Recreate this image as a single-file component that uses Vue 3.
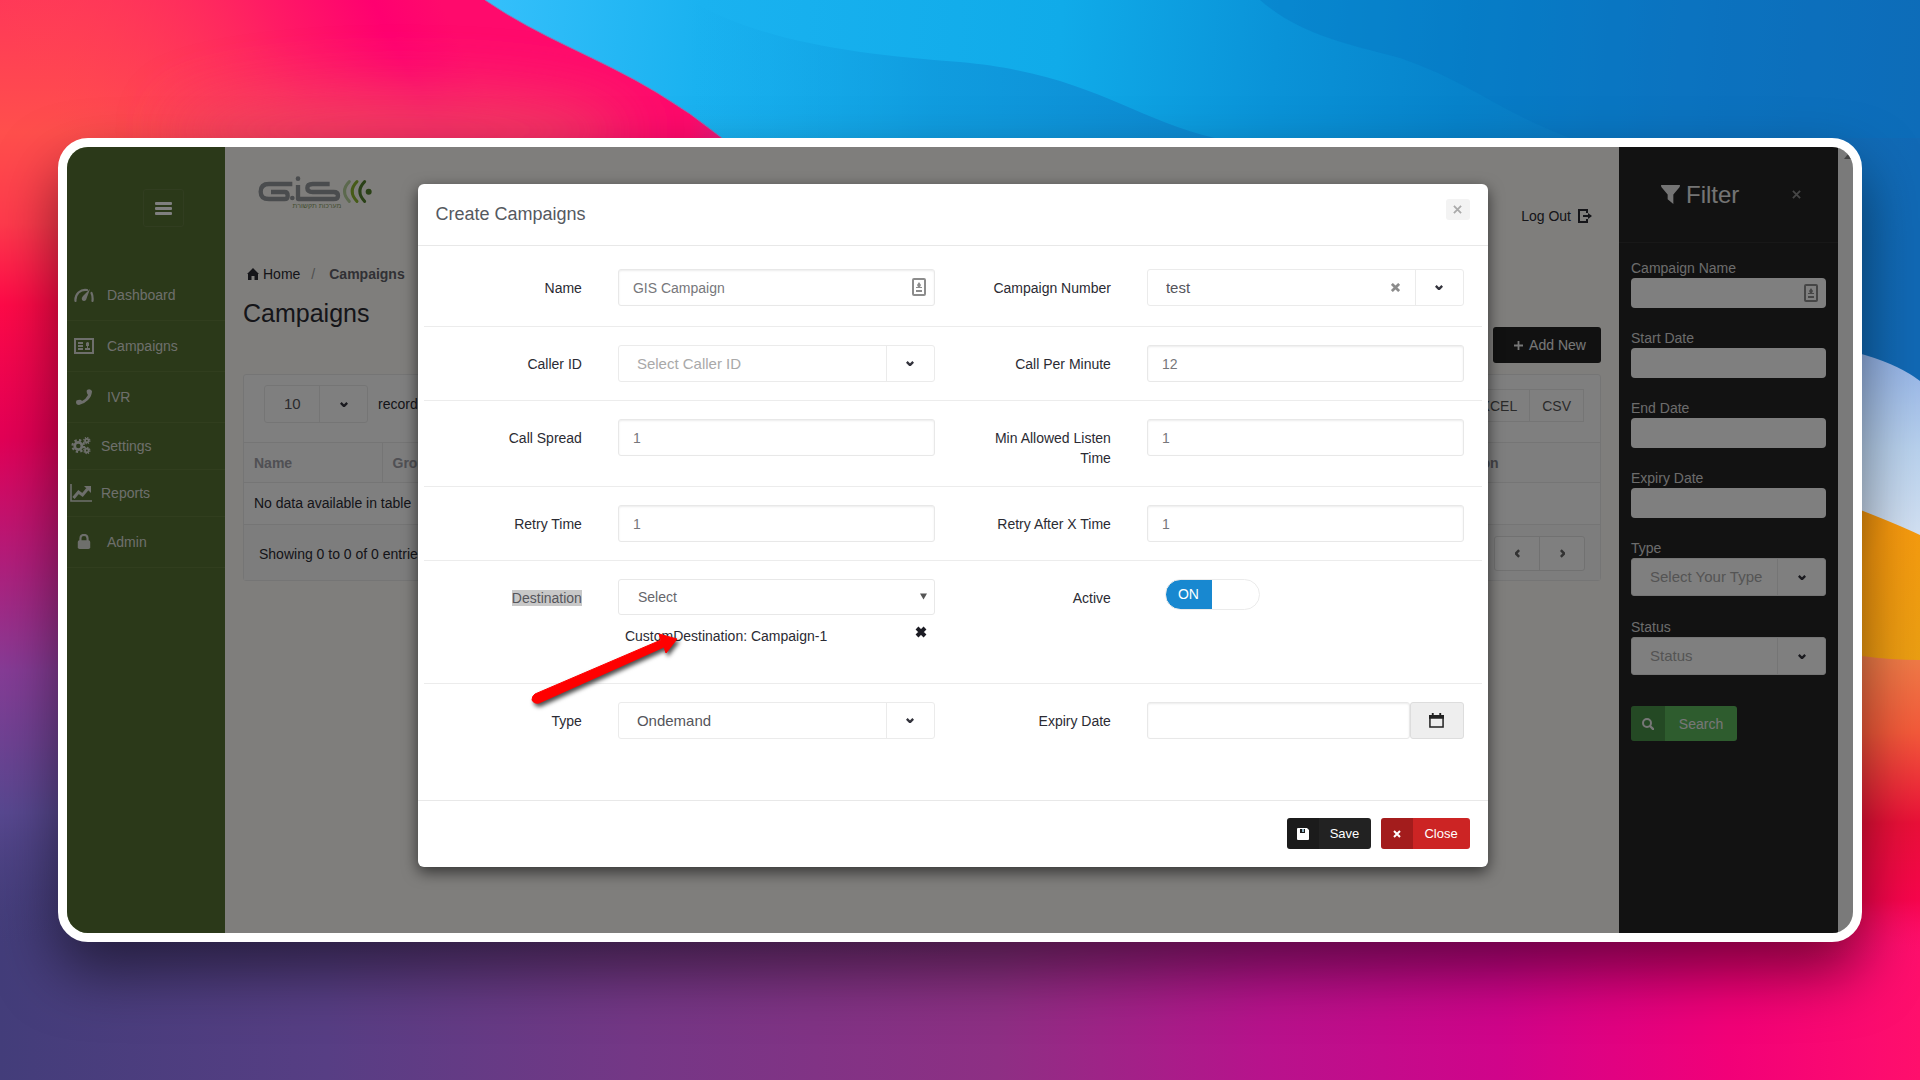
<script setup>
import { ref } from 'vue'

const navItems = [
  { label: 'Dashboard', icon: 'gauge' },
  { label: 'Campaigns', icon: 'card' },
  { label: 'IVR', icon: 'phone' },
  { label: 'Settings', icon: 'cogs', group: true },
  { label: 'Reports', icon: 'chart', group: true },
  { label: 'Admin', icon: 'lock' },
]

const filterDates = [
  { id: 'f-start', label: 'Start Date' },
  { id: 'f-end', label: 'End Date' },
  { id: 'f-expiry', label: 'Expiry Date' },
]

const filterSelects = [
  { id: 'f-type', label: 'Type', text: 'Select Your Type' },
  { id: 'f-status', label: 'Status', text: 'Status' },
]

const rows = [
  [
    { id: 'name', label: 'Name', kind: 'contact', value: 'GIS Campaign' },
    { id: 'number', label: 'Campaign Number', kind: 'select', value: 'test', clear: true },
  ],
  [
    { id: 'caller', label: 'Caller ID', kind: 'select', value: 'Select Caller ID', empty: true },
    { id: 'cpm', label: 'Call Per Minute', kind: 'text', value: '12' },
  ],
  [
    { id: 'spread', label: 'Call Spread', kind: 'text', value: '1' },
    { id: 'listen', label: 'Min Allowed Listen Time', kind: 'text', value: '1' },
  ],
  [
    { id: 'retry', label: 'Retry Time', kind: 'text', value: '1' },
    { id: 'retryx', label: 'Retry After X Time', kind: 'text', value: '1' },
  ],
  [
    { id: 'dest', label: 'Destination', kind: 'destination', value: 'Select' },
    { id: 'active', label: 'Active', kind: 'toggle' },
  ],
  [
    { id: 'type', label: 'Type', kind: 'select', value: 'Ondemand' },
    { id: 'expiry', label: 'Expiry Date', kind: 'date' },
  ],
]

const active = ref(true)
</script>

<template>
  <div class="stage">
    <svg class="wallpaper" viewBox="0 0 1920 1080" preserveAspectRatio="none" aria-hidden="true">
      <defs>
        <linearGradient id="wBottom" x1="0" x2="1" y1="0" y2="0">
          <stop offset="0" stop-color="#433d7a" />
          <stop offset=".17" stop-color="#573e84" />
          <stop offset=".33" stop-color="#743786" />
          <stop offset=".52" stop-color="#8e2f84" />
          <stop offset=".66" stop-color="#b8128c" />
          <stop offset=".78" stop-color="#d0048a" />
          <stop offset=".9" stop-color="#f20078" />
          <stop offset="1" stop-color="#ff0f6c" />
        </linearGradient>
        <linearGradient id="wLeft" x1="0" x2="0" y1="0" y2="1">
          <stop offset="0" stop-color="#ff3858" />
          <stop offset=".13" stop-color="#ff4f4c" />
          <stop offset=".22" stop-color="#ff3a4c" />
          <stop offset=".3" stop-color="#ff0a48" />
          <stop offset=".43" stop-color="#e40056" />
          <stop offset=".54" stop-color="#b81a78" />
          <stop offset=".66" stop-color="#863c96" />
          <stop offset=".8" stop-color="#584890" />
          <stop offset=".94" stop-color="#433d7a" stop-opacity="0" />
        </linearGradient>
        <linearGradient id="wPink" x1="60" x2="420" y1="140" y2="-40" gradientUnits="userSpaceOnUse">
          <stop offset="0" stop-color="#ff4a50" stop-opacity="0" />
          <stop offset=".6" stop-color="#ff1c64" />
          <stop offset=".85" stop-color="#ff0070" />
          <stop offset="1" stop-color="#ff0a6c" />
        </linearGradient>
        <linearGradient id="wBlue" x1="485" x2="1920" y1="0" y2="120" gradientUnits="userSpaceOnUse">
          <stop offset="0" stop-color="#35c0fb" />
          <stop offset=".15" stop-color="#1ab2f0" />
          <stop offset=".4" stop-color="#10abe9" />
          <stop offset=".55" stop-color="#0a93d8" />
          <stop offset=".68" stop-color="#0783cb" />
          <stop offset=".85" stop-color="#0f72bf" />
          <stop offset="1" stop-color="#1169b5" />
        </linearGradient>
        <linearGradient id="wWave" x1="690" x2="1300" y1="0" y2="0" gradientUnits="userSpaceOnUse">
          <stop offset="0" stop-color="#12a4e6" stop-opacity="0" />
          <stop offset=".4" stop-color="#0f98dc" stop-opacity=".8" />
          <stop offset="1" stop-color="#0c82cc" />
        </linearGradient>
        <linearGradient id="wSky" x1="0" x2="0" y1="0" y2="1">
          <stop offset="0" stop-color="#8eaee6" />
          <stop offset=".5" stop-color="#b9d2ee" />
          <stop offset="1" stop-color="#dbe6f5" />
        </linearGradient>
        <linearGradient id="wOrange" x1="0" x2="1" y1="0" y2="1">
          <stop offset="0" stop-color="#d9820a" />
          <stop offset=".5" stop-color="#f99a0e" />
          <stop offset="1" stop-color="#e8a014" />
        </linearGradient>
        <linearGradient id="wRed" x1="0" x2="0" y1="656" y2="960" gradientUnits="userSpaceOnUse">
          <stop offset="0" stop-color="#f07c48" />
          <stop offset=".25" stop-color="#f45a3a" />
          <stop offset=".55" stop-color="#ea1038" />
          <stop offset=".8" stop-color="#f8054c" />
          <stop offset="1" stop-color="#ff1070" stop-opacity="0" />
        </linearGradient>
        <filter id="soft" x="-50%" y="-200%" width="200%" height="500%"><feGaussianBlur stdDeviation="30" /></filter>
      </defs>
      <rect width="1920" height="1080" fill="url(#wBottom)" />
      <rect width="960" height="1016" fill="url(#wLeft)" />
      <rect width="900" height="160" fill="url(#wPink)" />
      <ellipse cx="400" cy="130" rx="230" ry="40" fill="#f04a60" opacity=".8" filter="url(#soft)" />
      <path d="M485 0C540 38 600 58 656 92Q690 112 722 138L960 420H1920V0Z" fill="url(#wBlue)" />
      <path d="M485 0C540 38 600 58 656 92Q690 112 722 138" stroke="#8a78b8" stroke-width="1" fill="none" />
      <path d="M690 0C760 42 860 55 960 62C1090 74 1130 118 1215 138L1300 160H690Z" fill="url(#wWave)" />
      <path d="M1260 0C1300 34 1340 42 1400 58C1470 82 1500 112 1570 138H1920V0Z" fill="#0674c0" opacity=".35" />
      <path d="M1780 339Q1880 350 1920 381V560H1780Z" fill="url(#wSky)" />
      <path d="M1780 480Q1880 516 1920 535V700H1780Z" fill="url(#wOrange)" />
      <path d="M1780 656H1862Q1890 660 1920 660V960H1780Z" fill="url(#wRed)" />
    </svg>

    <div class="window">
      <div class="app">
        <aside class="sidebar">
          <button class="toggle-nav" type="button" aria-label="Toggle navigation"><i></i><i></i><i></i></button>
          <nav>
            <a v-for="item in navItems" :key="item.label" href="#" class="nav-item" :class="{ group: item.group }">
              <svg v-if="item.icon === 'gauge'" viewBox="0 0 20 16">
                <path d="M1.500 14Q1 9 4.500 5.500Q8.500 2 13 3" fill="none" stroke="currentColor" stroke-width="2.200" stroke-linecap="round" />
                <path d="M17.500 6Q19 9 18.500 14" fill="none" stroke="currentColor" stroke-width="2.200" stroke-linecap="round" />
                <path d="M16 2L12 13Q10 15 8 13Q7 11 9 9Z" fill="currentColor" />
              </svg>
              <svg v-else-if="item.icon === 'card'" viewBox="0 0 20 16">
                <rect x="1" y="1" width="18" height="14" fill="none" stroke="currentColor" stroke-width="2" />
                <path d="M4 5h5M4 8h5M4 11h5" stroke="currentColor" stroke-width="2" />
                <path d="M11 12v-2h2v-2h-1V5q2-2 3 0v3h-1v2h2v2z" fill="currentColor" />
              </svg>
              <svg v-else-if="item.icon === 'phone'" viewBox="0 0 20 16">
                <path d="M13 1q3-2 5 1q0 5-4 9t-9 5q-3 0-3-3q0-2 2-2q3-1 4 1q4-2 6-6q-2-3-1-5z" fill="currentColor" />
              </svg>
              <svg v-else-if="item.icon === 'cogs'" viewBox="0 0 22 20">
                <g fill="none" stroke="currentColor">
                  <circle cx="8" cy="10" r="4" stroke-width="3" />
                  <circle cx="8" cy="10" r="6.500" stroke-width="2.400" stroke-dasharray="2.600 2.500" />
                  <circle cx="17.500" cy="4" r="2" stroke-width="2" />
                  <circle cx="17.500" cy="4" r="3.400" stroke-width="1.400" stroke-dasharray="1.400 1.270" />
                  <circle cx="17.500" cy="15" r="2" stroke-width="2" />
                  <circle cx="17.500" cy="15" r="3.400" stroke-width="1.400" stroke-dasharray="1.400 1.270" />
                </g>
              </svg>
              <svg v-else-if="item.icon === 'chart'" viewBox="0 0 22 18">
                <path d="M1 0v17h21" fill="none" stroke="currentColor" stroke-width="1.600" />
                <path d="M3.500 14l5-6 4 3 5-6" fill="none" stroke="currentColor" stroke-width="3" />
                <path d="M14 2h7v7z" fill="currentColor" />
              </svg>
              <svg v-else viewBox="0 0 20 18">
                <rect x="3" y="7" width="14" height="10" rx="2" fill="currentColor" />
                <path d="M6 8V5q0-4 4-4t4 4v3" fill="none" stroke="currentColor" stroke-width="2.400" />
              </svg>
              <span>{{ item.label }}</span>
            </a>
          </nav>
        </aside>

        <main class="main">
          <header class="topbar">
            <svg class="logo" viewBox="620 136 351 105" role="img" aria-label="G.iS">
              <g fill="none" stroke="#94989c" stroke-width="13" stroke-linejoin="round">
                <path d="M726 163H656Q631 163 631 186Q631 208 656 208H703Q712 208 712 198Q712 187 703 187H662" />
                <path d="M838 163H787Q771 163 771 175Q771 187 787 187H850Q863 187 863 198Q863 208 850 208H743V166" />
              </g>
              <circle cx="726" cy="205" r="7" fill="#94989c" />
              <circle cx="743" cy="147" r="7" fill="#94989c" />
              <g fill="none" stroke-width="9" stroke-linecap="round">
                <path d="M897 156Q868 185 897 215" stroke="#b9d29c" />
                <path d="M920 156Q891 185 920 215" stroke="#8cb62e" />
                <path d="M943 156Q914 185 943 215" stroke="#55822e" />
              </g>
              <circle cx="955" cy="186" r="9" fill="#55822e" />
              <text x="800" y="234" text-anchor="middle" font-size="21" fill="#8aa068">מערכות תקשורת</text>
            </svg>
            <a class="logout" href="#">
              Log Out
              <svg viewBox="0 0 14 14"><path d="M9 4V1H1v12h8v-3M5 7h8" fill="none" stroke="currentColor" stroke-width="2" /><path d="M10 4l4 3-4 3z" fill="currentColor" /></svg>
            </a>
          </header>

          <nav class="crumbs" aria-label="Breadcrumb">
            <svg viewBox="0 0 12 12"><path d="M6 0l6 6h-1v6H7.500V8h-3v4H1V6H0z" fill="currentColor" /></svg>
            <a href="#">Home</a><span class="slash">/</span><strong>Campaigns</strong>
          </nav>

          <div class="title-row">
            <h1>Campaigns</h1>
            <button class="add" type="button">
              <svg viewBox="0 0 10 10"><path d="M5 0v10M0 5h10" stroke="currentColor" stroke-width="2" /></svg>Add New
            </button>
          </div>

          <section class="panel">
            <div class="tools">
              <label class="length">
                <span class="pick small">
                  <select aria-label="Records per page"><option>10</option></select>
                  <span class="caret"><svg viewBox="0 0 10 6"><path d="M1 1l4 4 4-4" /></svg></span>
                </span>
                records
              </label>
              <div class="exports"><button type="button">EXCEL</button><button type="button">CSV</button></div>
            </div>
            <table>
              <thead><tr><th class="c-name">Name</th><th>Group</th><th class="c-act">Action</th></tr></thead>
              <tbody><tr><td colspan="3">No data available in table</td></tr></tbody>
            </table>
            <footer class="panel-foot">
              <span>Showing 0 to 0 of 0 entries</span>
              <div class="pager">
                <button type="button" aria-label="Previous"><svg viewBox="0 0 6 10"><path d="M5 1L1 5l4 4" /></svg></button>
                <button type="button" aria-label="Next"><svg viewBox="0 0 6 10"><path d="M1 1l4 4-4 4" /></svg></button>
              </div>
            </footer>
          </section>
        </main>

        <aside class="filter">
          <header>
            <h2>
              <svg viewBox="0 0 20 20"><path d="M0 0h20q0 2-1 3l-6 7v10l-6-5v-5L1 3Q0 2 0 0z" fill="currentColor" /></svg>Filter
            </h2>
            <button type="button" aria-label="Close filter"><svg viewBox="0 0 10 10"><path d="M1 1l8 8M9 1l-8 8" stroke="currentColor" stroke-width="2" /></svg></button>
          </header>
          <form @submit.prevent>
            <label for="f-name">Campaign Name</label>
            <div class="contact">
              <input id="f-name" type="text" />
              <svg viewBox="0 0 14 18"><rect x="1" y="1" width="12" height="16" rx="1" fill="none" stroke="currentColor" stroke-width="2" /><path d="M7 4l2 3-1 2h2v1H4V9h2L5 7zM4 12h6v2H4z" fill="currentColor" /></svg>
            </div>
            <template v-for="f in filterDates" :key="f.id">
              <label :for="f.id">{{ f.label }}</label>
              <input :id="f.id" type="text" />
            </template>
            <template v-for="f in filterSelects" :key="f.id">
              <label :for="f.id">{{ f.label }}</label>
              <span class="pick empty">
                <select :id="f.id"><option>{{ f.text }}</option></select>
                <span class="caret"><svg viewBox="0 0 10 6"><path d="M1 1l4 4 4-4" /></svg></span>
              </span>
            </template>
            <button class="split search" type="submit">
              <i><svg viewBox="0 0 12 12"><circle cx="5" cy="5" r="4" fill="none" stroke="currentColor" stroke-width="2" /><path d="M8 8l4 4" stroke="currentColor" stroke-width="2.400" /></svg></i><span>Search</span>
            </button>
          </form>
        </aside>
        <div class="scrollbar"><svg viewBox="0 0 8 5"><path d="M4 0l4 5H0z" fill="currentColor" /></svg></div>
      </div>

      <div class="backdrop">
        <section class="modal" role="dialog" aria-labelledby="modal-title">
          <header class="modal-head">
            <h3 id="modal-title">Create Campaigns</h3>
            <button type="button" aria-label="Close dialog"><svg viewBox="0 0 10 10"><path d="M1 1l8 8M9 1l-8 8" stroke="currentColor" stroke-width="2" /></svg></button>
          </header>
          <form class="modal-body" @submit.prevent>
            <div v-for="(row, i) in rows" :key="i" class="row">
              <div v-for="f in row" :key="f.id" class="field">
                <label :for="f.id" class="lbl"><span :class="{ marked: f.kind === 'destination' }">{{ f.label }}</span></label>

                <input v-if="f.kind === 'text'" :id="f.id" type="text" :value="f.value" class="box" />

                <div v-else-if="f.kind === 'contact'" class="contact">
                  <input :id="f.id" type="text" :value="f.value" class="box" />
                  <svg viewBox="0 0 14 18"><rect x="1" y="1" width="12" height="16" rx="1" fill="none" stroke="currentColor" stroke-width="2" /><path d="M7 4l2 3-1 2h2v1H4V9h2L5 7zM4 12h6v2H4z" fill="currentColor" /></svg>
                </div>

                <span v-else-if="f.kind === 'select'" class="pick" :class="{ empty: f.empty }">
                  <select :id="f.id"><option>{{ f.value }}</option></select>
                  <button v-if="f.clear" class="clear" type="button" aria-label="Clear"><svg viewBox="0 0 10 10"><path d="M1 1l8 8M9 1l-8 8" stroke="currentColor" stroke-width="3" /></svg></button>
                  <span class="caret"><svg viewBox="0 0 10 6"><path d="M1 1l4 4 4-4" /></svg></span>
                </span>

                <div v-else-if="f.kind === 'destination'" class="destination">
                  <div class="plain">
                    <select :id="f.id"><option>{{ f.value }}</option></select>
                    <svg viewBox="0 0 8 7"><path d="M0 0h8L4 7z" fill="currentColor" /></svg>
                  </div>
                  <div class="chosen">
                    <span>CustomDestination: Campaign-1</span>
                    <button type="button" aria-label="Remove destination"><svg viewBox="0 0 12 12"><path d="M2 2l8 8M10 2l-8 8" stroke="currentColor" stroke-width="4" /></svg></button>
                  </div>
                </div>

                <div v-else-if="f.kind === 'toggle'" class="switch">
                  <input :id="f.id" v-model="active" type="checkbox" />
                  <span aria-hidden="true">ON</span>
                </div>

                <div v-else class="date">
                  <input :id="f.id" type="text" class="box" />
                  <button type="button" aria-label="Open calendar"><svg viewBox="0 0 16 16"><path d="M1 3h14v12H1z" fill="none" stroke="currentColor" stroke-width="1.600" /><path d="M0 2h16v4H0zM3 0h2v3H3zM11 0h2v3h-2z" fill="currentColor" /></svg></button>
                </div>
              </div>
            </div>
          </form>
          <footer class="modal-foot">
            <button class="split save" type="button">
              <i><svg viewBox="0 0 12 12"><path d="M0 1q0-1 1-1h9l2 2v9q0 1-1 1H1q-1 0-1-1z" fill="currentColor" /><path d="M3 1h5v4H3z" fill="#1a1a1a" /><path d="M5 1h2v3H5z" fill="#8fb4c4" /></svg></i><span>Save</span>
            </button>
            <button class="split close" type="button">
              <i><svg class="x" viewBox="0 0 8 8"><path d="M1 1l6 6M7 1L1 7" stroke="currentColor" stroke-width="2" /></svg></i><span>Close</span>
            </button>
          </footer>
          <svg class="pointer" viewBox="0 0 155 80" aria-hidden="true">
            <path d="M5 66L131 12L129 6L147 11L136 25L134 19L9 75Q4 76 2 72Q2 68 5 66Z" fill="#f00" stroke="#f00" stroke-linejoin="round" />
          </svg>
        </section>
      </div>
    </div>
  </div>
</template>

<style>
body {
  margin: 0;
}
</style>

<style scoped>
* {
  box-sizing: border-box;
}
.stage {
  position: relative;
  min-height: 100vh;
  padding: 138px 58px;
  font: 14px/20px "Liberation Sans", Arial, sans-serif;
  color: #2b2b33;
}
.wallpaper {
  position: absolute;
  inset: 0;
  width: 100%;
  height: 100%;
}
button,
input,
select {
  font: inherit;
  color: inherit;
  margin: 0;
}
button {
  padding: 0;
  border: 0;
  background: none;
  cursor: pointer;
}
a {
  color: inherit;
  text-decoration: none;
}
svg {
  display: block;
  flex: none;
}
.window {
  position: relative;
  display: grid;
  border: 9px solid #fff;
  border-radius: 30px;
  overflow: hidden;
  background: #fff;
  box-shadow: 0 30px 60px rgba(0, 0, 0, 0.5);
}
.app,
.backdrop {
  grid-area: 1 / 1;
  min-width: 0;
}
.app {
  display: grid;
  grid-template-columns: 158px 1fr 219px 15px;
  background: #fffdf8;
}

/* Sidebar */
.sidebar {
  background: #567232;
  padding-top: 42px;
  color: #fff;
}
.toggle-nav {
  display: flex;
  flex-direction: column;
  align-items: center;
  justify-content: center;
  gap: 2px;
  width: 41px;
  height: 38px;
  margin: 0 41px 43px auto;
  border: 1px solid #627b40;
  border-radius: 3px;
}
.toggle-nav i {
  width: 17px;
  height: 3px;
  border-radius: 1px;
  background: #fff;
}
.nav-item {
  display: flex;
  align-items: center;
  gap: 13px;
  height: 51px;
  padding-left: 7px;
  border-bottom: 1px solid #637d3d;
  color: #dcdfd8;
}
.nav-item svg {
  width: 20px;
  height: 16px;
}
.nav-item.group {
  height: 47px;
  padding-left: 3px;
  gap: 9px;
}
.nav-item.group svg {
  width: 22px;
  height: 18px;
}

/* Main column */
.main {
  padding: 28px 18px 0;
  min-width: 0;
}
.topbar {
  display: flex;
  justify-content: space-between;
  align-items: center;
  height: 82px;
  padding: 0 9px 0 14px;
}
.logo {
  width: 117px;
  height: 35px;
  align-self: flex-start;
}
.logout {
  display: flex;
  align-items: center;
  gap: 7px;
}
.logout svg {
  width: 14px;
  height: 14px;
}
.crumbs {
  display: flex;
  align-items: center;
  height: 34px;
  padding-left: 4px;
}
.crumbs svg {
  width: 12px;
  height: 12px;
  margin-right: 4px;
}
.slash {
  margin: 0 14px 0 11px;
  color: #a0a0a0;
}
.crumbs strong {
  color: #62626a;
}
.title-row {
  display: flex;
  justify-content: space-between;
  height: 72px;
  margin-bottom: 11px;
}
h1 {
  margin: 0;
  font-size: 25px;
  font-weight: 400;
  line-height: 44px;
}
.add {
  display: flex;
  align-items: center;
  justify-content: center;
  gap: 6px;
  align-self: flex-end;
  width: 108px;
  height: 36px;
  padding-left: 6px;
  border-radius: 3px;
  background: #222;
  color: #eee;
}
.add svg {
  width: 9px;
  height: 9px;
}
.panel {
  border: 1px solid #ebebeb;
  border-radius: 3px;
  background: #fff;
}
.tools {
  display: flex;
  justify-content: space-between;
  height: 67px;
  padding: 10px 16px 0 20px;
}
.length {
  display: flex;
  align-items: center;
  gap: 10px;
  height: 38px;
}
.exports {
  display: flex;
  height: 33px;
  margin-top: 4px;
  border: 1px solid #ebebeb;
}
.exports button {
  padding: 0 12px;
  color: #555;
}
.exports button + button {
  border-left: 1px solid #ebebeb;
}
table {
  width: 100%;
  border-collapse: collapse;
  table-layout: fixed;
}
th,
td {
  height: 41px;
  padding: 0 10px;
  border-top: 1px solid #ebebeb;
  text-align: left;
}
th {
  height: 40px;
  background: #fcfcfc;
  color: #a0a0a8;
}
th + th {
  border-left: 1px solid #ebebeb;
}
.c-name {
  width: 138px;
}
th.c-act {
  width: 155px;
  color: #8a8a92;
  border-left: 0;
}
.panel-foot {
  display: flex;
  align-items: center;
  justify-content: space-between;
  height: 56px;
  padding: 3px 15px 0;
  border-top: 1px solid #ebebeb;
  background: #fafafa;
}
.pager {
  display: flex;
  align-self: flex-start;
  height: 35px;
  margin-top: 8px;
  border: 1px solid #e2e2e2;
  border-radius: 3px;
  background: #fff;
}
.pager button {
  display: grid;
  place-items: center;
  width: 44px;
  color: #666;
}
.pager button + button {
  width: 45px;
  border-left: 1px solid #e2e2e2;
}
.pager svg {
  width: 5px;
  height: 9px;
}
.pager path,
.caret path {
  fill: none;
  stroke: currentColor;
  stroke-width: 3;
}

/* Drop-downs with a separate caret cell */
.pick {
  position: relative;
  display: block;
  font-size: 15px;
  color: #55555b;
}
.pick select {
  appearance: none;
  display: block;
  width: 100%;
  height: 37px;
  padding: 0 56px 0 18px;
  border: 1px solid #ebebeb;
  border-radius: 3px;
  background: #fff;
}
.pick.empty select {
  color: #a9a9a9;
}
.caret {
  position: absolute;
  top: 1px;
  right: 1px;
  bottom: 1px;
  width: 48px;
  display: grid;
  place-items: center;
  border-left: 1px solid #ebebeb;
  color: #33333c;
  pointer-events: none;
}
.caret svg {
  width: 8px;
  height: 5px;
}
.pick.small {
  width: 104px;
}
.pick.small select {
  height: 38px;
  padding: 0 48px 0 19px;
}
.clear {
  position: absolute;
  top: 14px;
  right: 64px;
  color: #8c8c8c;
}
.clear svg {
  width: 9px;
  height: 9px;
}

/* Filter column */
.filter {
  background: #242424;
  color: #d8d8d8;
}
.filter header {
  display: flex;
  align-items: center;
  justify-content: space-between;
  height: 96px;
  padding: 0 37px 0 42px;
  border-bottom: 1px solid #303030;
}
h2 {
  display: flex;
  align-items: center;
  gap: 6px;
  margin: 0;
  font-size: 24px;
  font-weight: 400;
  color: #e8e8e8;
}
h2 svg {
  width: 19px;
  height: 19px;
}
.filter header button {
  color: #8c8c8c;
}
.filter header button svg {
  width: 9px;
  height: 9px;
}
.filter form {
  display: flex;
  flex-direction: column;
  padding: 15px 12px 0;
}
.filter label {
  height: 20px;
}
.filter input {
  display: block;
  width: 100%;
  height: 30px;
  margin-bottom: 20px;
  padding: 0 10px;
  border: 0;
  border-radius: 4px;
  background: #fff;
}
.filter .pick {
  margin-bottom: 21px;
}
.filter .pick select {
  height: 38px;
}
.contact {
  position: relative;
}
.contact svg {
  position: absolute;
  top: 9px;
  right: 9px;
  width: 14px;
  height: 18px;
  color: #8c8c8c;
}
.filter .contact svg {
  top: 6px;
  right: 8px;
}
.split {
  display: flex;
  overflow: hidden;
  height: 31px;
  border-radius: 3px;
  color: #fff;
  font-size: 13px;
}
.split i {
  display: grid;
  place-items: center;
  width: 32px;
  height: 100%;
  background: rgba(0, 0, 0, 0.2);
}
.split svg {
  width: 12px;
  height: 12px;
}
.split svg.x {
  width: 8px;
  height: 8px;
}
.split span {
  flex: 1;
  align-self: center;
  text-align: center;
}
.search {
  width: 106px;
  height: 35px;
  margin-top: 10px;
  background: #5cb85c;
  color: #eee;
  font-size: 14px;
}
.search i {
  width: 34px;
}
.scrollbar {
  padding: 7px 0 0 6px;
  background: #f5f5f5;
  color: #888;
}
.scrollbar svg {
  width: 8px;
  height: 5px;
}

/* Dialog */
.backdrop {
  position: relative;
  padding: 37px 15px 66px 0;
  background: rgba(0, 0, 0, 0.5);
}
.modal {
  position: relative;
  width: min(1070px, 100%);
  margin: 0 auto;
  border-radius: 6px;
  background: #fff;
  box-shadow: 0 5px 15px rgba(0, 0, 0, 0.6);
}
.modal-head {
  display: flex;
  justify-content: space-between;
  align-items: flex-start;
  height: 62px;
  padding: 15px 18px 0;
  border-bottom: 1px solid #e8e8e8;
}
h3 {
  margin: 0;
  font-size: 18px;
  font-weight: 400;
  line-height: 30px;
  color: #55595f;
}
.modal-head button {
  display: grid;
  place-items: center;
  width: 24px;
  height: 21px;
  border-radius: 3px;
  background: #f3f3f3;
  color: #aaa;
}
.modal-head button svg {
  width: 9px;
  height: 9px;
}
.modal-body {
  padding: 6px 6px 43px;
}
.row {
  display: grid;
  grid-template-columns: 1fr 1fr;
  padding: 18px 0;
  border-bottom: 1px solid #ececec;
}
.row:first-child {
  padding: 17px 0 20px;
}
.row:last-child {
  border-bottom: 0;
}
.field {
  display: grid;
  grid-template-columns: 31% 1fr;
  column-gap: 36px;
  align-items: start;
  padding-right: 18px;
}
.lbl {
  padding: 9px 0 0 15px;
  text-align: right;
}
.marked {
  background: #c8c8c8;
  color: #55555b;
}
.box {
  display: block;
  width: 100%;
  height: 37px;
  padding: 0 14px;
  border: 1px solid #e8e8e8;
  border-radius: 3px;
  background: #fff;
  color: #77777b;
  box-shadow: inset 0 1px 2px rgba(0, 0, 0, 0.08);
}
.destination {
  height: 86px;
}
.plain {
  position: relative;
}
.plain select {
  appearance: none;
  display: block;
  width: 100%;
  height: 36px;
  padding: 0 19px;
  border: 1px solid #e8e8e8;
  border-radius: 3px;
  background: #fff;
  color: #66666c;
}
.plain svg {
  position: absolute;
  top: 14px;
  right: 8px;
  width: 7px;
  height: 7px;
  color: #555;
}
.chosen {
  display: flex;
  align-items: flex-start;
  justify-content: space-between;
  padding: 11px 8px 0 7px;
}
.chosen button {
  color: #1c1c24;
}
.chosen svg {
  width: 12px;
  height: 12px;
}
.switch {
  position: relative;
  width: 95px;
  height: 31px;
  margin-left: 18px;
}
.switch input {
  appearance: none;
  display: block;
  width: 95px;
  height: 31px;
  border: 1px solid #ebebeb;
  border-radius: 16px;
  background: #fff;
  cursor: pointer;
}
.switch input:checked {
  background: linear-gradient(90deg, #1888d0 46px, #fff 46px);
}
.switch span {
  position: absolute;
  inset: 0 48px 0 0;
  line-height: 31px;
  text-align: center;
  color: #fff;
  pointer-events: none;
}
.date {
  display: flex;
}
.date button {
  display: grid;
  place-items: center;
  flex: none;
  width: 54px;
  height: 37px;
  border: 1px solid #ddd;
  border-radius: 3px;
  background: #eee;
}
.date svg {
  width: 15px;
  height: 15px;
  color: #222;
}
.modal-foot {
  display: flex;
  justify-content: flex-end;
  gap: 10px;
  height: 67px;
  padding: 17px 18px 0;
  border-top: 1px solid #e8e8e8;
}
.save {
  width: 84px;
  background: #222;
}
.close {
  width: 89px;
  background: #cc2424;
}
.pointer {
  position: absolute;
  top: 444px;
  left: 112px;
  width: 155px;
  height: 80px;
  filter: drop-shadow(2px 3px 2px rgba(0, 0, 0, 0.7));
  pointer-events: none;
}
</style>
